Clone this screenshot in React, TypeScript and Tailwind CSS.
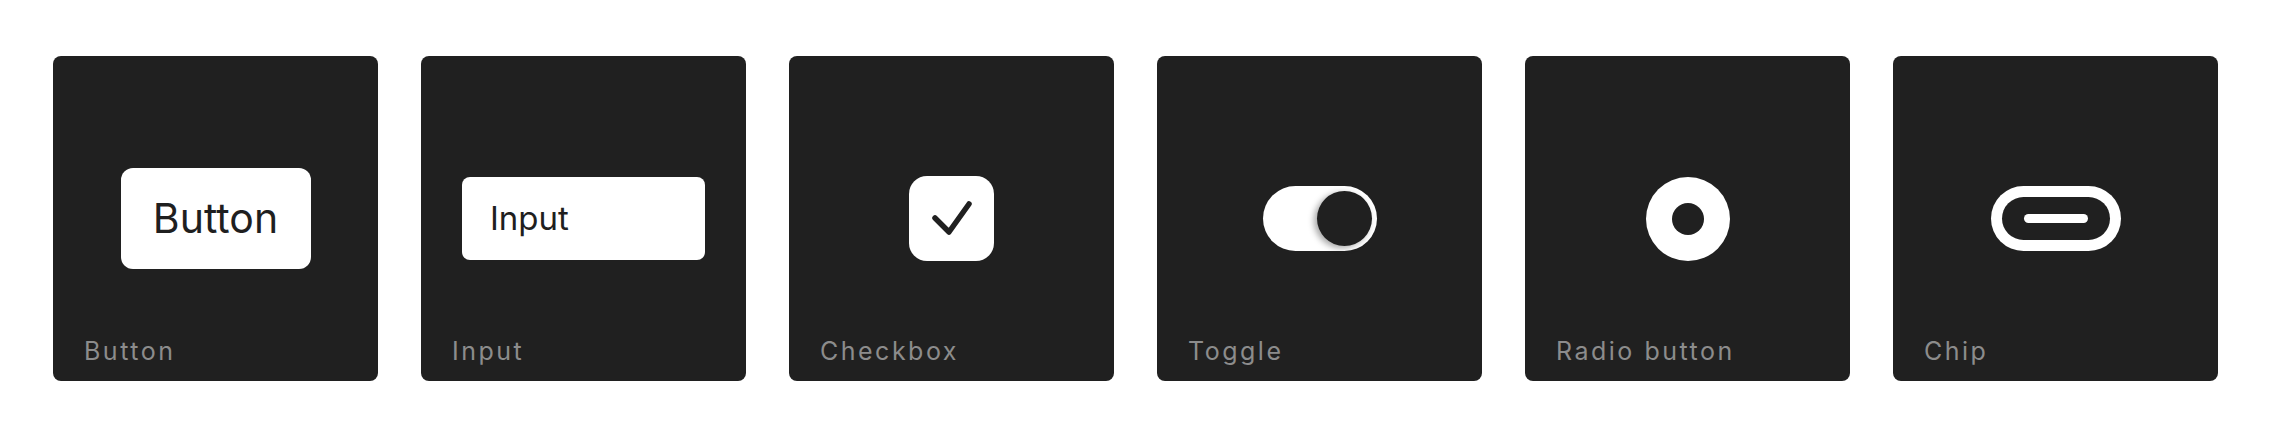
const font = { fontFamily: 'Inter, "Noto Sans", sans-serif' };

function Card({ label, children }: { label: string; children: React.ReactNode }) {
  return (
    <div className="w-[325px] h-[325px] shrink-0 rounded-lg bg-[#202020] grid grid-rows-[1fr_auto_1fr]">
      <div />
      <div className="flex items-center justify-center">{children}</div>
      <div className="flex items-end pl-[31px] pb-[17px]">
        <span className="text-[25px] leading-none tracking-[0.1em] text-[#8c8c8c]">{label}</span>
      </div>
    </div>
  );
}

export default function App() {
  return (
    <div className="w-[2278px] h-[448px] bg-white" style={font}>
      <div className="flex gap-[43px] pl-[53px] pt-[56px]">
        {/* Button */}
        <Card label="Button">
          <div className="w-[190px] h-[101px] rounded-[12px] bg-white flex items-center justify-center">
            <span className="text-[41px] leading-none text-[#1f1f1f]">Button</span>
          </div>
        </Card>

        {/* Input */}
        <Card label="Input">
          <div className="w-[243px] h-[83px] rounded-[8px] bg-white flex items-center pl-[28px]">
            <span className="text-[33px] leading-none text-[#1f1f1f]">Input</span>
          </div>
        </Card>

        {/* Checkbox */}
        <Card label="Checkbox">
          <div className="w-[85px] h-[85px] rounded-[18px] bg-white flex items-center justify-center">
            <svg width="85" height="85" viewBox="0 0 85 85" fill="none">
              <path
                d="M26 42 L40 56 L60 28"
                stroke="#202020"
                strokeWidth="5.5"
                strokeLinecap="round"
                strokeLinejoin="round"
              />
            </svg>
          </div>
        </Card>

        {/* Toggle */}
        <Card label="Toggle">
          <div className="w-[114px] h-[65px] rounded-full bg-white flex items-center justify-end pr-[5px]">
            <div className="w-[55px] h-[55px] rounded-full bg-[#202020] shadow-[-3px_2px_6px_rgba(0,0,0,0.35)]" />
          </div>
        </Card>

        {/* Radio button */}
        <Card label="Radio button">
          <div className="w-[84px] h-[84px] rounded-full bg-white flex items-center justify-center">
            <div className="w-[32px] h-[32px] rounded-full bg-[#202020]" />
          </div>
        </Card>

        {/* Chip */}
        <Card label="Chip">
          <div className="w-[130px] h-[65px] rounded-full bg-white p-[11px]">
            <div className="w-full h-full rounded-full bg-[#202020] flex items-center justify-center">
              <div className="w-[64px] h-[9px] rounded-full bg-white" />
            </div>
          </div>
        </Card>
      </div>
    </div>
  );
}
